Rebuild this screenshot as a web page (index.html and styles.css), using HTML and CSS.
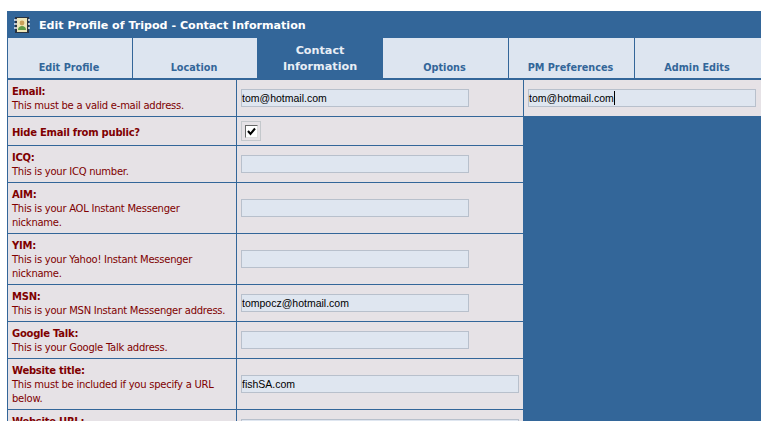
FILE: index.html
```html
<!DOCTYPE html>
<html lang="en">
<head>
<meta charset="utf-8">
<title>Edit Profile</title>
<link rel="stylesheet" href="styles.css">
</head>
<body>
<div class="panel">
  <div class="title">
    <svg class="icon" width="18" height="18" viewBox="0 0 18 18">
      <rect x="2" y="1" width="14" height="16" fill="#2a3340"/>
      <rect x="4" y="2" width="10" height="14" fill="#efe6b8"/>
      <circle cx="9" cy="7" r="2.4" fill="#c9a05a"/>
      <path d="M5 14c0-3 2-4 4-4s4 1 4 4z" fill="#5f9a45"/>
      <path d="M1 4h3M1 8h3M1 12h3M15 4h2M15 8h2M15 12h2" stroke="#e8edf3" stroke-width="1.4"/>
    </svg>
    <span>Edit Profile of Tripod - Contact Information</span>
  </div>
  <div class="tabs">
    <a class="tab">Edit Profile</a>
    <a class="tab">Location</a>
    <a class="tab active">Contact Information</a>
    <a class="tab">Options</a>
    <a class="tab">PM Preferences</a>
    <a class="tab">Admin Edits</a>
  </div>
  <div class="content">
    <div class="rows">
      <div class="row h36">
        <div class="label"><b>Email:</b>This must be a valid e-mail address.</div>
        <div class="field"><input class="input short" type="text" value="tom@hotmail.com"></div>
      </div>
      <div class="row h28">
        <div class="label"><b>Hide Email from public?</b></div>
        <div class="field"><span class="checkwrap"><span class="check"><svg width="11" height="11" viewBox="0 0 11 11"><path d="M2 5l2.5 3L9 2.5" fill="none" stroke="#000" stroke-width="2"/></svg></span></span></div>
      </div>
      <div class="row h36">
        <div class="label"><b>ICQ:</b>This is your ICQ number.</div>
        <div class="field"><input class="input short" type="text"></div>
      </div>
      <div class="row h50">
        <div class="label"><b>AIM:</b>This is your AOL Instant Messenger nickname.</div>
        <div class="field"><input class="input short" type="text"></div>
      </div>
      <div class="row h50">
        <div class="label"><b>YIM:</b>This is your Yahoo! Instant Messenger nickname.</div>
        <div class="field"><input class="input short" type="text"></div>
      </div>
      <div class="row h36">
        <div class="label"><b>MSN:</b>This is your MSN Instant Messenger address.</div>
        <div class="field"><input class="input short" type="text" value="tompocz@hotmail.com"></div>
      </div>
      <div class="row h36">
        <div class="label"><b>Google Talk:</b>This is your Google Talk address.</div>
        <div class="field"><input class="input short" type="text"></div>
      </div>
      <div class="row h50">
        <div class="label"><b>Website title:</b>This must be included if you specify a URL below.</div>
        <div class="field"><input class="input long" type="text" value="fishSA.com"></div>
      </div>
      <div class="row h36">
        <div class="label"><b>Website URL:</b>This is your website address.</div>
        <div class="field"><input class="input long" type="text"></div>
      </div>
    </div>
    <div class="side">
      <div class="side-cell"><span class="fake-input">tom@hotmail.com<i class="caret"></i></span></div>
    </div>
  </div>
</div>
</body>
</html>
```
FILE: styles.css
```css
* { box-sizing: border-box; }
html, body { margin: 0; background: #fff; }
body { height: 422px; overflow: hidden; font-family: "DejaVu Sans", Verdana, sans-serif; }
.panel {
  width: 754px;
  height: 410px;
  margin: 11px 0 0 7px;
  background: #336699;
  overflow: hidden;
}
.title {
  height: 27px;
  display: flex;
  align-items: center;
  gap: 8px;
  padding: 1px 0 0 6px;
  color: #fff;
  font-size: 11.1px;
  font-weight: bold;
}
.icon { flex: none; }
.tabs {
  display: grid;
  grid-template-columns: 124px 124px 124px 125px 125px 126px;
  gap: 1px;
  margin-left: 1px;
  height: 40px;
}
.tab {
  background: #dde5f0;
  color: #336699;
  font-size: 9.7px;
  font-weight: bold;
  display: flex;
  align-items: flex-end;
  justify-content: center;
  text-align: center;
  padding: 0 2px 5px 0;
}
.tab.active {
  background: #336699;
  color: #e8eef5;
  font-size: 11.2px;
  line-height: 16px;
  padding: 5px 20px 3px;
}
.content {
  display: flex;
  gap: 1px;
  margin: 2px 0 0 1px;
}
.rows { width: 515px; flex: none; display: flex; flex-direction: column; gap: 1px; }
.row { display: grid; grid-template-columns: 228px 286px; gap: 1px; }
.h28 { height: 28px; }
.h36 { height: 36px; }
.h50 { height: 50px; }
.label {
  background: #e6e2e6;
  color: #7f0000;
  font-size: 10px;
  letter-spacing: -0.25px;
  line-height: 14px;
  padding: 5px 10px 1px 4px;
}
.label b { display: block; }
.h28 .label { display: flex; align-items: center; padding-top: 4px; }
.field {
  background: #e6e2e6;
  display: flex;
  align-items: center;
  padding-left: 4px;
}
.input {
  height: 18px;
  border: 1px solid #b8c0cc;
  background: #dfe6f0;
  padding: 0;
  font-family: "Liberation Sans", Arial, sans-serif;
  font-size: 10.5px;
  color: #000;
  outline: none;
}
.short { width: 228px; }
.long { width: 278px; }
.checkwrap {
  width: 20px;
  height: 20px;
  border: 1px solid #c4c8cc;
  display: flex;
  align-items: center;
  justify-content: center;
}
.check {
  width: 13px;
  height: 13px;
  background: #fff;
  border: 1px solid;
  border-color: #666 #ddd #ddd #666;
  display: flex;
  align-items: center;
  justify-content: center;
}
.side { width: 237px; flex: none; }
.side-cell {
  background: #e6e2e6;
  height: 36px;
  display: flex;
  align-items: center;
  padding-left: 4px;
}
.fake-input {
  width: 228px;
  height: 18px;
  border: 1px solid #b8c0cc;
  background: #dfe6f0;
  font-family: "Liberation Sans", Arial, sans-serif;
  font-size: 10.5px;
  line-height: 16px;
  color: #000;
  display: flex;
  align-items: center;
}
.caret { width: 1px; height: 14px; background: #000; }
```
